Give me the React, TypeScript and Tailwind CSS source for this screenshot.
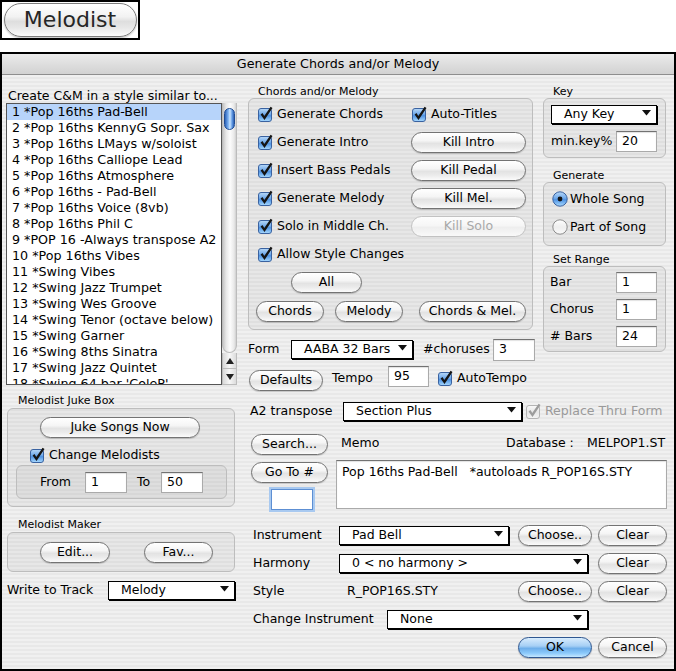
import { useId } from 'react'

const STYLES = [
  '1 *Pop 16ths Pad-Bell',
  '2 *Pop 16ths KennyG Sopr. Sax',
  '3 *Pop 16ths LMays w/soloist',
  '4 *Pop 16ths Calliope Lead',
  '5 *Pop 16ths Atmosphere',
  '6 *Pop 16ths - Pad-Bell',
  '7 *Pop 16ths Voice (8vb)',
  '8 *Pop 16ths Phil C',
  '9 *POP 16 -Always transpose A2',
  '10 *Pop 16ths Vibes',
  '11 *Swing Vibes',
  '12 *Swing Jazz Trumpet',
  '13 *Swing Wes Groove',
  '14 *Swing Tenor (octave below)',
  '15 *Swing Garner',
  '16 *Swing 8ths Sinatra',
  '17 *Swing Jazz Quintet',
  "18 *Swing 64 bar 'ColeP'",
]

const BTN =
  'flex h-[21px] shrink-0 items-center justify-center rounded-full border text-[12.5px] leading-none'
const BTN_NORMAL =
  'border-[#737373] bg-[linear-gradient(180deg,#ffffff_0%,#f5f5f5_40%,#e3e3e3_55%,#ebebeb_75%,#fbfbfb_100%)] text-black shadow-[0_1px_1px_rgba(0,0,0,0.18)]'
const BTN_DISABLED =
  'border-[#c2c2c2] bg-[linear-gradient(180deg,#fdfdfd_0%,#f6f6f6_45%,#eeeeee_55%,#f9f9f9_100%)] text-[#a8a8a8]'
const BTN_PRIMARY =
  'border-[#2f5791] bg-[linear-gradient(180deg,#d8ecfd_0%,#a6cff5_42%,#6eaeea_55%,#8ccafb_80%,#c4e7ff_100%)] text-black shadow-[0_1px_1px_rgba(0,0,0,0.25)]'

function Button({
  label,
  className = '',
  disabled = false,
  primary = false,
}: {
  label: string
  className?: string
  disabled?: boolean
  primary?: boolean
}) {
  const look = primary ? BTN_PRIMARY : disabled ? BTN_DISABLED : BTN_NORMAL
  return (
    <button type="button" className={`${BTN} ${look} ${className}`}>
      {label}
    </button>
  )
}

function CheckBox({ disabled = false }: { disabled?: boolean }) {
  const id = useId()
  return (
    <svg width="16" height="16" viewBox="0 0 16 16" className="shrink-0 overflow-visible">
      <defs>
        <linearGradient id={id} x1="0" y1="0" x2="0" y2="1">
          {disabled ? (
            <>
              <stop offset="0" stopColor="#fafafa" />
              <stop offset="0.5" stopColor="#e6e6e6" />
              <stop offset="1" stopColor="#f4f4f4" />
            </>
          ) : (
            <>
              <stop offset="0" stopColor="#b9d9f8" />
              <stop offset="0.45" stopColor="#6ea8ea" />
              <stop offset="0.55" stopColor="#4f93e3" />
              <stop offset="1" stopColor="#a9dafe" />
            </>
          )}
        </linearGradient>
      </defs>
      <rect
        x="0.5"
        y="2.5"
        width="13"
        height="13"
        rx="2.5"
        fill={`url(#${id})`}
        stroke={disabled ? '#b4b4b4' : '#3a62a0'}
      />
      <path
        d="M2.6 8.6 L4.5 7.1 L6.3 9.9 L12.6 0.8 L14.5 2.1 L6.5 13.9 Z"
        fill={disabled ? '#9c9c9c' : '#151515'}
      />
    </svg>
  )
}

function Radio({ on = false }: { on?: boolean }) {
  const id = useId()
  return (
    <svg width="16" height="16" viewBox="0 0 16 16" className="shrink-0">
      <defs>
        <linearGradient id={id} x1="0" y1="0" x2="0" y2="1">
          {on ? (
            <>
              <stop offset="0" stopColor="#b9d9f8" />
              <stop offset="0.45" stopColor="#6ea8ea" />
              <stop offset="0.55" stopColor="#4f93e3" />
              <stop offset="1" stopColor="#a9dafe" />
            </>
          ) : (
            <>
              <stop offset="0" stopColor="#ffffff" />
              <stop offset="0.5" stopColor="#eeeeee" />
              <stop offset="1" stopColor="#fafafa" />
            </>
          )}
        </linearGradient>
      </defs>
      <circle cx="8" cy="8" r="7.2" fill={`url(#${id})`} stroke={on ? '#3a62a0' : '#8c8c8c'} />
      {on && <circle cx="8" cy="8" r="2.4" fill="#151515" />}
    </svg>
  )
}

function Popup({ value, className = '' }: { value: string; className?: string }) {
  return (
    <div
      className={`flex h-[19px] shrink-0 items-center justify-between border border-black bg-white pl-[12px] pr-[5px] text-[12.5px] shadow-[1px_1px_0_#000] ${className}`}
    >
      <span>{value}</span>
      <svg width="9" height="6" viewBox="0 0 9 6" className="mb-[3px]">
        <polygon points="0,0 9,0 4.5,5.5" fill="#111" />
      </svg>
    </div>
  )
}

function Field({ value = '', className = '' }: { value?: string; className?: string }) {
  return (
    <div
      className={`flex h-[21px] shrink-0 items-center border border-[#aaaaaa] border-t-[#727272] bg-white pl-[5px] text-[12.5px] shadow-[inset_0_1px_1px_rgba(0,0,0,0.12)] ${className}`}
    >
      {value}
    </div>
  )
}

const GROUP = 'shrink-0 rounded-[6px] border border-[#bdbdbd] bg-[rgba(0,0,0,0.035)]'
const CAPTION = 'h-[13px] shrink-0 text-[11px] leading-[13px]'

function ScrollBar() {
  return (
    <div className="flex h-[282px] w-[15px] shrink-0 flex-col">
      <div className="flex h-[250px] flex-col rounded-b-[8px] border-x border-b border-[#bcbcbc] bg-[linear-gradient(90deg,#c6c6c6_0%,#e8e8e8_25%,#fcfcfc_55%,#e9e9e9_85%,#cfcfcf_100%)]">
        <div className="mx-auto mt-[5px] h-[22px] w-[11px] rounded-full border border-[#1f4c94] bg-[linear-gradient(90deg,#2d62b6_0%,#79aff0_35%,#cbe6ff_55%,#5d97e3_80%,#2f5fae_100%)]" />
      </div>
      <div className="flex h-[16px] items-center justify-center border-x border-b border-[#bcbcbc] bg-[linear-gradient(90deg,#d9d9d9,#f7f7f7_50%,#dcdcdc)]">
        <svg width="8" height="6" viewBox="0 0 8 6">
          <polygon points="4,0 8,6 0,6" fill="#222" />
        </svg>
      </div>
      <div className="flex h-[16px] items-center justify-center border-x border-b border-[#bcbcbc] bg-[linear-gradient(90deg,#d9d9d9,#f7f7f7_50%,#dcdcdc)]">
        <svg width="8" height="6" viewBox="0 0 8 6">
          <polygon points="0,0 8,0 4,6" fill="#222" />
        </svg>
      </div>
    </div>
  )
}

function LeftColumn() {
  return (
    <div className="ml-[4px] flex w-[231px] shrink-0 flex-col pt-[14px]">
      <div className="h-[14px] pl-[2px] text-[12.5px] leading-[14px]">Create C&amp;M in a style similar to...</div>
      <div className="flex">
        <div className="h-[282px] w-[216px] shrink-0 overflow-hidden border border-[#555555] bg-white">
          {STYLES.map((s, i) => (
            <div
              key={s}
              className={`h-[16px] whitespace-nowrap pl-[5px] text-[12.7px] leading-[16px] ${i === 0 ? 'bg-[#b7d4fa]' : ''}`}
            >
              {s}
            </div>
          ))}
        </div>
        <ScrollBar />
      </div>

      <div className={`${CAPTION} mt-[9px] pl-[12px]`}>Melodist Juke Box</div>
      <div className={`${GROUP} ml-[1px] mt-[1px] flex h-[99px] w-[228px] flex-col items-start`}>
        <Button label="Juke Songs Now" className="ml-[32px] mt-[8px] w-[160px]" />
        <div className="ml-[22px] mt-[9px] flex h-[16px] items-center gap-[3px] text-[12.5px]">
          <CheckBox />
          <span>Change Melodists</span>
        </div>
        <div className={`${GROUP} ml-[8px] mt-[2px] flex h-[34px] w-[211px] items-center text-[12.5px]`}>
          <span className="ml-[23px] w-[45px]">From</span>
          <Field value="1" className="w-[42px]" />
          <span className="ml-[10px] w-[24px]">To</span>
          <Field value="50" className="w-[42px]" />
        </div>
      </div>

      <div className={`${CAPTION} mt-[11px] pl-[12px]`}>Melodist Maker</div>
      <div className={`${GROUP} ml-[1px] mt-[1px] flex h-[40px] w-[228px] items-center`}>
        <Button label="Edit..." className="ml-[32px] w-[70px]" />
        <Button label="Fav..." className="ml-[34px] w-[69px]" />
      </div>

      <div className="mt-[9px] flex h-[19px] items-center text-[12.5px]">
        <span className="w-[102px] pl-[1px]">Write to Track</span>
        <Popup value="Melody" className="w-[127px]" />
      </div>
    </div>
  )
}

function CheckRow({ label }: { label: string }) {
  return (
    <div className="flex items-center gap-[3px] text-[12.5px]">
      <CheckBox />
      <span>{label}</span>
    </div>
  )
}

function ChordsGroup() {
  const rows: [string, string][] = [
    ['Generate Chords', ''],
    ['Generate Intro', 'Kill Intro'],
    ['Insert Bass Pedals', 'Kill Pedal'],
    ['Generate Melody', 'Kill Mel.'],
    ['Solo in Middle Ch.', 'Kill Solo'],
    ['Allow Style Changes', ''],
  ]
  return (
    <div className={`${GROUP} flex h-[232px] w-[285px] flex-col items-start pt-[1px]`}>
      {rows.map(([left, right], i) => (
        <div key={left} className="flex h-[28px] items-center">
          <div className="w-[162px] pl-[9px]">
            <CheckRow label={left} />
          </div>
          {i === 0 && (
            <div className="ml-[1px]">
              <CheckRow label="Auto-Titles" />
            </div>
          )}
          {right && <Button label={right} disabled={right === 'Kill Solo'} className="w-[115px]" />}
        </div>
      ))}
      <Button label="All" className="ml-[42px] mt-[4px] w-[71px]" />
      <div className="mt-[8px] flex">
        <Button label="Chords" className="ml-[7px] w-[68px]" />
        <Button label="Melody" className="ml-[11px] w-[68px]" />
        <Button label="Chords & Mel." className="ml-[16px] w-[107px]" />
      </div>
    </div>
  )
}

function RightColumn() {
  return (
    <div className="ml-[8px] flex w-[123px] shrink-0 flex-col pt-[10px] text-[12.5px]">
      <div className={`${CAPTION} pl-[10px]`}>Key</div>
      <div className={`${GROUP} flex h-[60px] flex-col pl-[7px] pt-[6px]`}>
        <Popup value="Any Key" className="w-[106px]" />
        <div className="mt-[7px] flex h-[21px] items-center">
          <span className="w-[65px]">min.key%</span>
          <Field value="20" className="w-[41px]" />
        </div>
      </div>

      <div className={`${CAPTION} mt-[11px] pl-[10px]`}>Generate</div>
      <div className={`${GROUP} flex h-[64px] flex-col pl-[8px] pt-[2px]`}>
        <div className="flex h-[28px] items-center gap-[2px]">
          <Radio on />
          <span>Whole Song</span>
        </div>
        <div className="flex h-[28px] items-center gap-[2px]">
          <Radio />
          <span>Part of Song</span>
        </div>
      </div>

      <div className={`${CAPTION} mt-[7px] pl-[10px]`}>Set Range</div>
      <div className={`${GROUP} flex h-[86px] flex-col gap-[6px] pl-[6px] pt-[5px]`}>
        {[
          ['Bar', '1'],
          ['Chorus', '1'],
          ['# Bars', '24'],
        ].map(([l, v]) => (
          <div key={l} className="flex h-[21px] items-center">
            <span className="w-[66px]">{l}</span>
            <Field value={v} className="w-[41px]" />
          </div>
        ))}
      </div>
    </div>
  )
}

function MainArea() {
  return (
    <div className="ml-[11px] flex w-[419px] shrink-0 flex-col text-[12.5px]">
      <div className="flex items-start">
        <div className="flex w-[287px] shrink-0 flex-col pt-[10px]">
          <div className={`${CAPTION} pl-[10px]`}>Chords and/or Melody</div>
          <ChordsGroup />
          <div className="mt-[8px] flex h-[23px] items-center">
            <span className="w-[43px]">Form</span>
            <Popup value="AABA 32 Bars" className="w-[122px]" />
            <span className="ml-[10px] w-[70px]">#choruses</span>
            <Field value="3" className="h-[22px] w-[42px]" />
          </div>
          <div className="mt-[5px] flex h-[24px] items-start">
            <Button label="Defaults" className="ml-[1px] mt-[4px] w-[74px]" />
            <span className="ml-[9px] mt-[3px] w-[56px]">Tempo</span>
            <Field value="95" className="w-[41px]" />
            <div className="ml-[9px] mt-[3px]">
              <CheckRow label="AutoTempo" />
            </div>
          </div>
        </div>
        <RightColumn />
      </div>

      <div className="mt-[11px] flex h-[20px] items-center">
        <span className="ml-[2px] w-[93px]">A2 transpose</span>
        <Popup value="Section Plus" className="w-[179px]" />
        <div className="ml-[4px] flex items-center gap-[3px] text-[#9a9a9a]">
          <CheckBox disabled />
          <span>Replace Thru Form</span>
        </div>
      </div>

      <div className="mt-[13px] flex">
        <div className="ml-[3px] flex w-[77px] shrink-0 flex-col">
          <Button label="Search..." className="w-[77px]" />
          <Button label="Go To #" className="mt-[7px] w-[77px]" />
          <div className="ml-[20px] mt-[6px] h-[21px] w-[42px] border border-[#5d8fd3] bg-white shadow-[0_0_0_2px_#a8c9f0]" />
        </div>
        <div className="ml-[8px] flex flex-col">
          <div className="flex h-[19px] items-center">
            <span className="w-[170px] pl-[5px]">Memo</span>
            <span className="w-[81px]">Database :</span>
            <span>MELPOP1.ST</span>
          </div>
          <div className="mt-[7px] h-[49px] w-[331px] border border-[#aaaaaa] border-t-[#727272] bg-white pl-[5px] pt-[3px] leading-[16px] shadow-[inset_0_1px_1px_rgba(0,0,0,0.12)]">
            <span className="whitespace-pre">Pop 16ths Pad-Bell   *autoloads R_POP16S.STY</span>
          </div>
        </div>
      </div>

      <div className="mt-[15px] flex h-[21px] items-center">
        <span className="ml-[5px] w-[86px]">Instrument</span>
        <Popup value="Pad Bell" className="w-[170px]" />
        <Button label="Choose.." className="ml-[9px] w-[74px]" />
        <Button label="Clear" className="ml-[6px] w-[69px]" />
      </div>
      <div className="mt-[7px] flex h-[21px] items-center">
        <span className="ml-[5px] w-[86px]">Harmony</span>
        <Popup value="0 < no harmony >" className="w-[249px]" />
        <Button label="Clear" className="ml-[10px] w-[69px]" />
      </div>
      <div className="mt-[7px] flex h-[21px] items-center">
        <span className="ml-[5px] w-[86px]">Style</span>
        <span className="w-[179px] pl-[8px]">R_POP16S.STY</span>
        <Button label="Choose.." className="w-[74px]" />
        <Button label="Clear" className="ml-[6px] w-[69px]" />
      </div>
      <div className="mt-[7px] flex h-[21px] items-center">
        <span className="ml-[5px] w-[134px]">Change Instrument</span>
        <Popup value="None" className="w-[201px]" />
      </div>
      <div className="mt-[7px] flex h-[21px] items-center">
        <Button label="OK" primary className="ml-[270px] w-[74px]" />
        <Button label="Cancel" className="ml-[6px] w-[69px]" />
      </div>
    </div>
  )
}

export default function App() {
  return (
    <div className="h-[671px] w-[676px] overflow-hidden bg-white font-['DejaVu_Sans',sans-serif] text-black">
      <div className="flex h-[40px] w-[140px] items-center justify-center border-2 border-black bg-white">
        <div className="flex h-[34px] w-[133px] items-center justify-center rounded-full border-[1.5px] border-[#7c7c7c] bg-[linear-gradient(180deg,#ffffff_0%,#f2f2f2_40%,#dedede_55%,#e8e8e8_75%,#fbfbfb_100%)] pb-[1px] text-[22px] text-[#262626] shadow-[0_1px_2px_rgba(0,0,0,0.25)]">
          Melodist
        </div>
      </div>

      <div className="mt-[12px] flex h-[619px] w-[676px] flex-col border-2 border-black">
        <div className="flex h-[21px] shrink-0 items-center justify-center border-b border-[#8e8e8e] bg-[linear-gradient(180deg,#ececec_0%,#dedede_50%,#d2d2d2_100%)] text-[12.7px]">
          Generate Chords and/or Melody
        </div>
        <div className="flex flex-1 items-start bg-[repeating-linear-gradient(180deg,#f0f0f0_0px,#f0f0f0_2px,#e8e8e8_2px,#e8e8e8_4px)]">
          <LeftColumn />
          <MainArea />
        </div>
      </div>
    </div>
  )
}
